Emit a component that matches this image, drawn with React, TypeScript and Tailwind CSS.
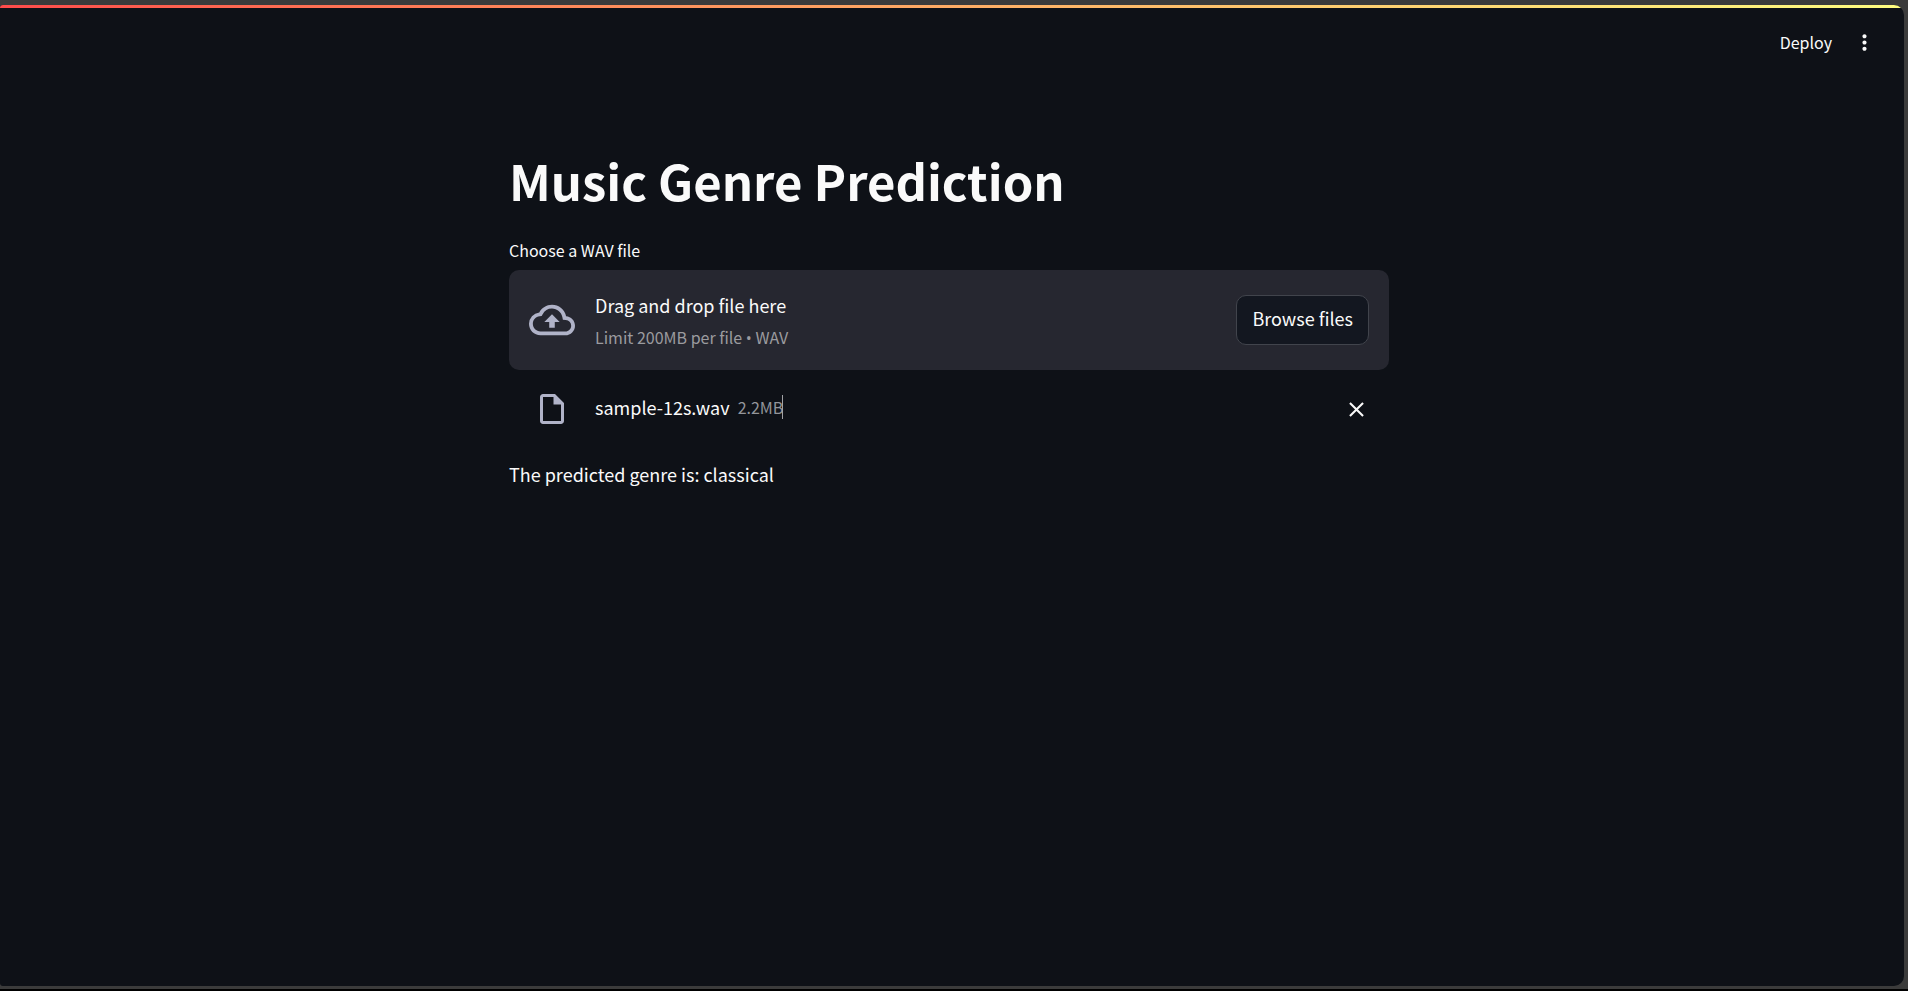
import { useRef, useState } from "react";
import {
  MdClose,
  MdMoreVert,
  MdOutlineCloudUpload,
  MdOutlineInsertDriveFile,
} from "react-icons/md";

function Header() {
  return (
    <header className="flex h-[68px] items-center justify-end gap-5 pr-[27px]">
      <button type="button" className="text-[16px] leading-6">
        Deploy
      </button>
      <button type="button" aria-label="Main menu">
        <MdMoreVert size={25} />
      </button>
    </header>
  );
}

function Dropzone({ onBrowse }: { onBrowse: () => void }) {
  return (
    <div className="flex items-center gap-5 rounded-[10px] bg-[#262730] p-5">
      <MdOutlineCloudUpload size={46} className="shrink-0 text-[#b0b3c8]" />
      <div className="flex grow flex-col gap-2 pt-[3px]">
        <span className="text-[18px] leading-6">Drag and drop file here</span>
        <small className="text-[16px] leading-6 text-[#9b9b9f]">
          Limit 200MB per file <span className="font-['Open_Sans',sans-serif]">•</span> WAV
        </small>
      </div>
      <button
        type="button"
        onClick={onBrowse}
        className="h-[50px] rounded-[10px] border border-[#41444c] bg-[#131720] px-[15px] pb-1 text-[18px] leading-6"
      >
        Browse files
      </button>
    </div>
  );
}

function UploadedFile({ name, size, onRemove }: { name: string; size: string; onRemove: () => void }) {
  return (
    <div className="flex h-[78px] items-center gap-[25px] pr-5 pl-[25px]">
      <MdOutlineInsertDriveFile size={36} className="shrink-0 text-[#b0b3c8]" />
      <div className="flex grow items-center gap-2 pb-[5px]">
        <span className="text-[18px] leading-6">{name}</span>
        <small className="relative text-[16px] leading-6 text-[#93959a]">
          {size}
          <span className="absolute top-0 right-0 h-6 w-px bg-[#a0a1a5]" />
        </small>
      </div>
      <button type="button" aria-label={"Remove " + name} onClick={onRemove}>
        <MdClose size={25} />
      </button>
    </div>
  );
}

export default function App() {
  const input = useRef<HTMLInputElement>(null);
  const [file, setFile] = useState<{ name: string; size: string } | null>({
    name: "sample-12s.wav",
    size: "2.2MB",
  });

  return (
    <div className="flex min-h-screen flex-col border-b-2 border-black bg-[#3b3b3b] pt-[5px] pr-1 pb-[3px] font-['Noto_Sans_CJK_SC','Noto_Sans',sans-serif] text-[#fafafa]">
      <div className="flex grow flex-col overflow-hidden rounded-[10px] rounded-l-[3px] bg-[#0e1117]">
        <div className="h-[3px] bg-linear-to-r from-[#ff4b4b] to-[#fffd80]" />
        <Header />
        <div className="pr-[6px]">
          <main className="mx-auto w-full max-w-[880px] pt-[71px]">
            <h1 className="text-[49px] leading-[66px] font-bold">Music Genre Prediction</h1>
            <label htmlFor="wav-file" className="mt-[25px] mb-2 block text-[16px] leading-6">
              Choose a WAV file
            </label>
            <input
              ref={input}
              id="wav-file"
              type="file"
              accept=".wav"
              className="sr-only"
              onChange={(event) => {
                const chosen = event.target.files?.[0];
                if (chosen) {
                  setFile({ name: chosen.name, size: (chosen.size / 1048576).toFixed(1) + "MB" });
                }
              }}
            />
            <Dropzone onBrowse={() => input.current?.click()} />
            {file && (
              <>
                <UploadedFile name={file.name} size={file.size} onRemove={() => setFile(null)} />
                <p className="mt-[14px] text-[18px] leading-6">The predicted genre is: classical</p>
              </>
            )}
          </main>
        </div>
      </div>
    </div>
  );
}
